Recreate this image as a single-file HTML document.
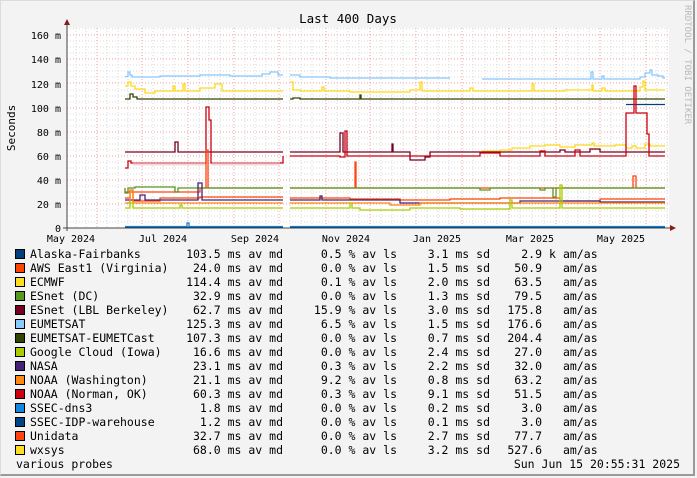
<!DOCTYPE html>
<html><head><meta charset="utf-8"><style>
html,body{margin:0;padding:0;}
body{width:697px;height:478px;background:#f3f3f3;position:relative;overflow:hidden;font-family:"DejaVu Sans Mono","Liberation Mono",monospace;}
.frame{position:absolute;left:0;top:0;width:695px;height:476px;border-top:1px solid #dcdcdc;border-left:1px solid #dcdcdc;border-right:2px solid #9a9a9a;border-bottom:2px solid #9a9a9a;box-sizing:border-box;}
.row{position:absolute;left:0;height:14px;font-size:11.5px;line-height:14px;color:#000;white-space:pre;}
.row span{position:absolute;top:0;}
.box{position:absolute;left:15px;width:8px;height:8px;border:1px solid #000;top:2px;}
</style></head><body>
<div class="frame"></div>
<svg width="697" height="478" style="position:absolute;left:0;top:0" xmlns="http://www.w3.org/2000/svg">
<rect x="67" y="28" width="602" height="200" fill="#ffffff"/>
<g id="grid" stroke-width="1" shape-rendering="crispEdges">
<g stroke="#d8d8d8" stroke-dasharray="1,2">
<line x1="67" x2="669" y1="222" y2="222"/><line x1="67" x2="669" y1="216" y2="216"/><line x1="67" x2="669" y1="210" y2="210"/>
<line x1="67" x2="669" y1="198" y2="198"/><line x1="67" x2="669" y1="192" y2="192"/><line x1="67" x2="669" y1="186" y2="186"/>
<line x1="67" x2="669" y1="174" y2="174"/><line x1="67" x2="669" y1="168" y2="168"/><line x1="67" x2="669" y1="162" y2="162"/>
<line x1="67" x2="669" y1="150" y2="150"/><line x1="67" x2="669" y1="144" y2="144"/><line x1="67" x2="669" y1="138" y2="138"/>
<line x1="67" x2="669" y1="126" y2="126"/><line x1="67" x2="669" y1="120" y2="120"/><line x1="67" x2="669" y1="114" y2="114"/>
<line x1="67" x2="669" y1="102" y2="102"/><line x1="67" x2="669" y1="96" y2="96"/><line x1="67" x2="669" y1="90" y2="90"/>
<line x1="67" x2="669" y1="77" y2="77"/><line x1="67" x2="669" y1="71" y2="71"/><line x1="67" x2="669" y1="65" y2="65"/>
<line x1="67" x2="669" y1="53" y2="53"/><line x1="67" x2="669" y1="47" y2="47"/><line x1="67" x2="669" y1="41" y2="41"/>
<line x1="67" x2="669" y1="29" y2="29"/>
<line x1="76" x2="76" y1="28" y2="228"/><line x1="86" x2="86" y1="28" y2="228"/><line x1="107" x2="107" y1="28" y2="228"/><line x1="118" x2="118" y1="28" y2="228"/><line x1="128" x2="128" y1="28" y2="228"/><line x1="153" x2="153" y1="28" y2="228"/><line x1="163" x2="163" y1="28" y2="228"/><line x1="174" x2="174" y1="28" y2="228"/><line x1="199" x2="199" y1="28" y2="228"/><line x1="209" x2="209" y1="28" y2="228"/><line x1="220" x2="220" y1="28" y2="228"/><line x1="245" x2="245" y1="28" y2="228"/><line x1="255" x2="255" y1="28" y2="228"/><line x1="266" x2="266" y1="28" y2="228"/><line x1="290" x2="290" y1="28" y2="228"/><line x1="301" x2="301" y1="28" y2="228"/><line x1="312" x2="312" y1="28" y2="228"/><line x1="337" x2="337" y1="28" y2="228"/><line x1="348" x2="348" y1="28" y2="228"/><line x1="359" x2="359" y1="28" y2="228"/><line x1="381" x2="381" y1="28" y2="228"/><line x1="392" x2="392" y1="28" y2="228"/><line x1="403" x2="403" y1="28" y2="228"/><line x1="427" x2="427" y1="28" y2="228"/><line x1="438" x2="438" y1="28" y2="228"/><line x1="449" x2="449" y1="28" y2="228"/><line x1="473" x2="473" y1="28" y2="228"/><line x1="485" x2="485" y1="28" y2="228"/><line x1="497" x2="497" y1="28" y2="228"/><line x1="520" x2="520" y1="28" y2="228"/><line x1="532" x2="532" y1="28" y2="228"/><line x1="544" x2="544" y1="28" y2="228"/><line x1="567" x2="567" y1="28" y2="228"/><line x1="578" x2="578" y1="28" y2="228"/><line x1="589" x2="589" y1="28" y2="228"/><line x1="611" x2="611" y1="28" y2="228"/><line x1="623" x2="623" y1="28" y2="228"/><line x1="634" x2="634" y1="28" y2="228"/><line x1="657" x2="657" y1="28" y2="228"/><line x1="667" x2="667" y1="28" y2="228"/>
</g>
<g stroke="#f2a0a0" stroke-dasharray="1,2">
<line x1="67" x2="669" y1="204" y2="204"/><line x1="67" x2="669" y1="180" y2="180"/><line x1="67" x2="669" y1="156" y2="156"/><line x1="67" x2="669" y1="132" y2="132"/><line x1="67" x2="669" y1="108" y2="108"/><line x1="67" x2="669" y1="83" y2="83"/><line x1="67" x2="669" y1="59" y2="59"/><line x1="67" x2="669" y1="35" y2="35"/>
<line x1="97" x2="97" y1="28" y2="228"/><line x1="142" x2="142" y1="28" y2="228"/><line x1="188" x2="188" y1="28" y2="228"/><line x1="234" x2="234" y1="28" y2="228"/><line x1="279" x2="279" y1="28" y2="228"/><line x1="326" x2="326" y1="28" y2="228"/><line x1="370" x2="370" y1="28" y2="228"/><line x1="416" x2="416" y1="28" y2="228"/><line x1="462" x2="462" y1="28" y2="228"/><line x1="509" x2="509" y1="28" y2="228"/><line x1="556" x2="556" y1="28" y2="228"/><line x1="600" x2="600" y1="28" y2="228"/><line x1="646" x2="646" y1="28" y2="228"/>
</g>
</g>
<g fill="none" stroke-width="1.3">
<path stroke="#88c8ff" d="M125 76.5H128V72H130V75H132V77H160V76H200V75H230V76H262V74H270V72H278V75H283M290 75H300V77H330V78H450M482 79H591V72H593V79H602V76H604V79H640V77H645V73H650V70H652V75H658V76H663V78H665"/>
<path stroke="#ffd91a" d="M125 86H128V82H131V86H135V89H145V93H155V91H173V86H175V91H183V84H185V91H200V88H215V84H222V91H283M290 82H293V90H300V91H322V87H324V91H350V92H410V90H420V82H422V91H470V88H473V91H532V84H534V91H565V90H592V85H593V91H602V88H605V91H640V87H643V81H645V90H665"/>
<path stroke="#334400" d="M125 99H130V94H133V97H137V99H283M290 99H293V98H300V99H360V95H361V99H665"/>
<path stroke="#004080" d="M626 104.5H665"/>
<path stroke="#ffd91a" d="M482 151H500V150H512V148H530V146H545V145H560V147H575V145H592V143H594V146H615V145H626V148H632V146H636V148H645V144H650V146H665"/>
<path stroke="#770022" d="M125 152H175V142H178V152H203V152H280V152H283M290 152H340V133H343V152H392V144H393V152H410V160H425V157H430V152H560V150H565V152H590V149H600V152H665"/>
<path stroke="#cc0011" d="M125 168H128V161H131V163H206V107H209V120H211V163H283V156M290 156H340V157H345V131H347V156H392V156H480V153H500V156H540V151H545V156H575V150H580V156H626V113H634V86H636V113H647V134H649V156H665"/>
<path stroke="#f0b8bc" stroke-width="3" opacity="0.6" d="M133 164H205M212 164H280"/>
<path stroke="#ff4411" d="M125 192H200V188H206V150H208V188H283M290 188H355V162H356V188H633V176H636V188H665"/>
<path stroke="#559922" d="M125 188V193H128V188H135V187H175V192H178V188H283M290 188H480V190H490V188H540V190H545V188H553V197H556V188H665"/>
<path stroke="#ff4400" d="M125 198H130V190H133V201H160V198H200V197H283M290 198H350V199H400V200H450V199H500V198H560V201H600V199H665"/>
<path stroke="#442277" d="M125 200H140V195H145V200H198V183H202V200H283M290 200H320V196H322V200H400V203H520V201H600V202H665"/>
<path stroke="#ff8811" d="M125 203H130V190H133V203H283M290 203H390V205H420V203H665"/>
<path stroke="#aacc00" d="M125 208H130V203H133V208H180V205H182V208H283M290 208H350V203H352V208H360V210H410V208H460V209H510V200H512V208H560V185H562V208H665"/>
<path stroke="#1188dd" d="M125 226.5H187V223H189V226.5H283M290 226.5H665"/>
<path stroke="#004488" d="M125 227.5H283M290 227.5H665"/>
</g>
<g stroke="#444" stroke-width="1" shape-rendering="crispEdges">
<line x1="67" y1="24" x2="67" y2="231"/>
<line x1="63" y1="228" x2="670" y2="228"/>
</g>
<polygon points="64,25 70,25 67,19" fill="#8b1a1a"/>
<polygon points="670,225 670,231 676,228" fill="#8b1a1a"/>
<g font-family="DejaVu Sans Mono, Liberation Mono, monospace" font-size="10" fill="#000">
<text x="348" y="23" font-size="12.5" text-anchor="middle">Last 400 Days</text>
<text x="15" y="128" font-size="11" text-anchor="middle" transform="rotate(-90 15 128)">Seconds</text>
<g text-anchor="end">
<text x="61" y="232">0</text><text x="61" y="208">20 m</text><text x="61" y="184">40 m</text><text x="61" y="160">60 m</text><text x="61" y="136">80 m</text><text x="61" y="112">100 m</text><text x="61" y="88">120 m</text><text x="61" y="63">140 m</text><text x="61" y="39">160 m</text>
</g>
<g text-anchor="middle">
<text x="71" y="242">May 2024</text><text x="163" y="242">Jul 2024</text><text x="255" y="242">Sep 2024</text><text x="346" y="242">Nov 2024</text><text x="437" y="242">Jan 2025</text><text x="530" y="242">Mar 2025</text><text x="621" y="242">May 2025</text>
</g>
<text x="685" y="5" font-size="9" fill="#b8b8b8" transform="rotate(90 685 5)">RRDTOOL / TOBI OETIKER</text>
</g>
</svg>

<div class="row" style="top:247px;width:697px"><div class="box" style="background:#004080"></div><span style="left:30px">Alaska-Fairbanks</span><span style="right:414px">103.5 ms av md</span><span style="right:300px">0.5 % av ls</span><span style="right:207px">3.1 ms sd</span><span style="right:155px">2.9</span><span style="left:549px">k</span><span style="left:563px">am/as</span></div>
<div class="row" style="top:261px;width:697px"><div class="box" style="background:#ff4400"></div><span style="left:30px">AWS East1 (Virginia)</span><span style="right:414px">24.0 ms av md</span><span style="right:300px">0.0 % av ls</span><span style="right:207px">1.5 ms sd</span><span style="right:155px">50.9</span><span style="left:563px">am/as</span></div>
<div class="row" style="top:275px;width:697px"><div class="box" style="background:#ffdd22"></div><span style="left:30px">ECMWF</span><span style="right:414px">114.4 ms av md</span><span style="right:300px">0.1 % av ls</span><span style="right:207px">2.0 ms sd</span><span style="right:155px">63.5</span><span style="left:563px">am/as</span></div>
<div class="row" style="top:289px;width:697px"><div class="box" style="background:#559922"></div><span style="left:30px">ESnet (DC)</span><span style="right:414px">32.9 ms av md</span><span style="right:300px">0.0 % av ls</span><span style="right:207px">1.3 ms sd</span><span style="right:155px">79.5</span><span style="left:563px">am/as</span></div>
<div class="row" style="top:303px;width:697px"><div class="box" style="background:#770022"></div><span style="left:30px">ESnet (LBL Berkeley)</span><span style="right:414px">62.7 ms av md</span><span style="right:300px">15.9 % av ls</span><span style="right:207px">3.0 ms sd</span><span style="right:155px">175.8</span><span style="left:563px">am/as</span></div>
<div class="row" style="top:317px;width:697px"><div class="box" style="background:#88ccff"></div><span style="left:30px">EUMETSAT</span><span style="right:414px">125.3 ms av md</span><span style="right:300px">6.5 % av ls</span><span style="right:207px">1.5 ms sd</span><span style="right:155px">176.6</span><span style="left:563px">am/as</span></div>
<div class="row" style="top:331px;width:697px"><div class="box" style="background:#334400"></div><span style="left:30px">EUMETSAT-EUMETCast</span><span style="right:414px">107.3 ms av md</span><span style="right:300px">0.0 % av ls</span><span style="right:207px">0.7 ms sd</span><span style="right:155px">204.4</span><span style="left:563px">am/as</span></div>
<div class="row" style="top:345px;width:697px"><div class="box" style="background:#aacc00"></div><span style="left:30px">Google Cloud (Iowa)</span><span style="right:414px">16.6 ms av md</span><span style="right:300px">0.0 % av ls</span><span style="right:207px">2.4 ms sd</span><span style="right:155px">27.0</span><span style="left:563px">am/as</span></div>
<div class="row" style="top:359px;width:697px"><div class="box" style="background:#442277"></div><span style="left:30px">NASA</span><span style="right:414px">23.1 ms av md</span><span style="right:300px">0.3 % av ls</span><span style="right:207px">2.2 ms sd</span><span style="right:155px">32.0</span><span style="left:563px">am/as</span></div>
<div class="row" style="top:373px;width:697px"><div class="box" style="background:#ff8811"></div><span style="left:30px">NOAA (Washington)</span><span style="right:414px">21.1 ms av md</span><span style="right:300px">9.2 % av ls</span><span style="right:207px">0.8 ms sd</span><span style="right:155px">63.2</span><span style="left:563px">am/as</span></div>
<div class="row" style="top:387px;width:697px"><div class="box" style="background:#cc0011"></div><span style="left:30px">NOAA (Norman, OK)</span><span style="right:414px">60.3 ms av md</span><span style="right:300px">0.3 % av ls</span><span style="right:207px">9.1 ms sd</span><span style="right:155px">51.5</span><span style="left:563px">am/as</span></div>
<div class="row" style="top:401px;width:697px"><div class="box" style="background:#1188dd"></div><span style="left:30px">SSEC-dns3</span><span style="right:414px">1.8 ms av md</span><span style="right:300px">0.0 % av ls</span><span style="right:207px">0.2 ms sd</span><span style="right:155px">3.0</span><span style="left:563px">am/as</span></div>
<div class="row" style="top:415px;width:697px"><div class="box" style="background:#004488"></div><span style="left:30px">SSEC-IDP-warehouse</span><span style="right:414px">1.2 ms av md</span><span style="right:300px">0.0 % av ls</span><span style="right:207px">0.1 ms sd</span><span style="right:155px">3.0</span><span style="left:563px">am/as</span></div>
<div class="row" style="top:429px;width:697px"><div class="box" style="background:#ff4411"></div><span style="left:30px">Unidata</span><span style="right:414px">32.7 ms av md</span><span style="right:300px">0.0 % av ls</span><span style="right:207px">2.7 ms sd</span><span style="right:155px">77.7</span><span style="left:563px">am/as</span></div>
<div class="row" style="top:443px;width:697px"><div class="box" style="background:#ffdd22"></div><span style="left:30px">wxsys</span><span style="right:414px">68.0 ms av md</span><span style="right:300px">0.0 % av ls</span><span style="right:207px">3.2 ms sd</span><span style="right:155px">527.6</span><span style="left:563px">am/as</span></div>
<div class="row" style="top:457px;width:697px"><span style="left:16px">various probes</span><span style="right:17px">Sun Jun 15 20:55:31 2025</span></div>
</body></html>
